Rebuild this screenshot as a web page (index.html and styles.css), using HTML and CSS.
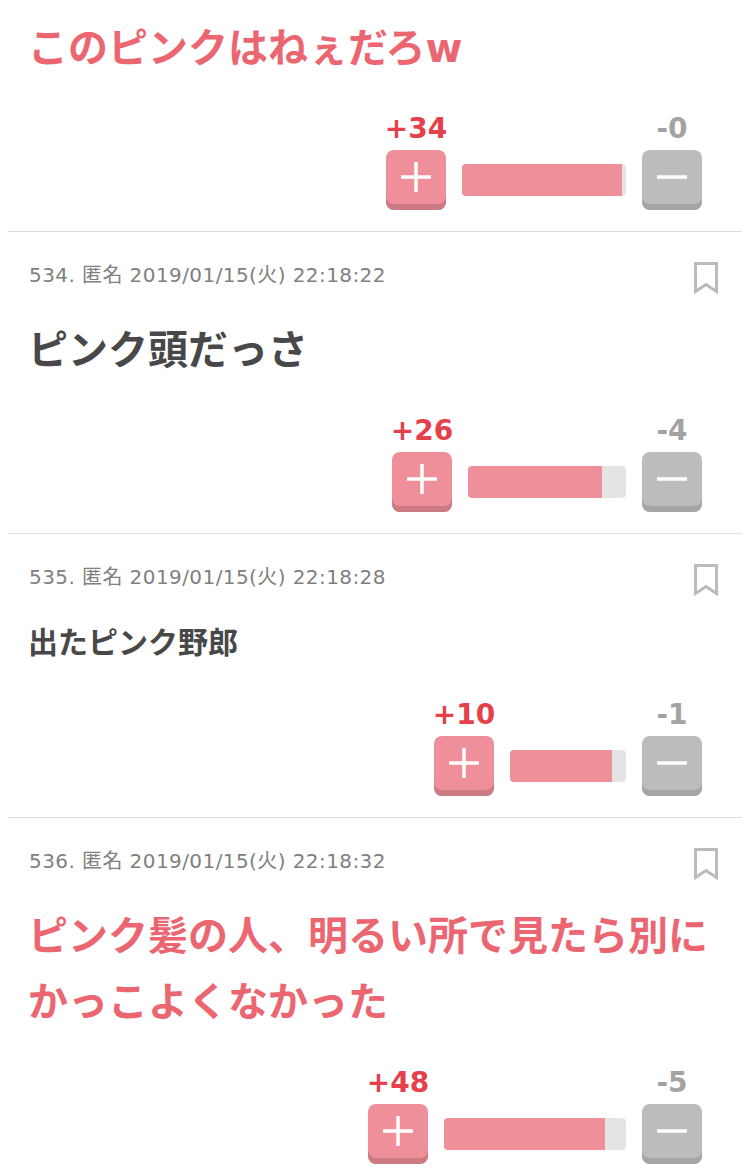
FILE: index.html
```html
<!DOCTYPE html>
<html lang="ja">
<head>
    <meta charset="UTF-8">
    <meta name="viewport" content="width=device-width, initial-scale=1.0">
    <title>コメント</title>
    <link rel="stylesheet" href="styles.css">
</head>
<body>
    <main class="comments">
        <!-- 533 starts above the fold, no header row -->
        <article class="comment comment-cut">
            <p class="comment-text large pink">このピンクはねぇだろw</p>
            <div class="votes">
                <div class="vote">
                    <span class="count plus-count">+34</span>
                    <button class="vote-btn plus"><svg viewBox="0 0 30 30"><path d="M15 0v30M0 15h30"/></svg></button>
                </div>
                <div class="bar" style="width: 164px"><div class="bar-fill" style="width: 160px"></div></div>
                <div class="vote">
                    <span class="count minus-count">-0</span>
                    <button class="vote-btn minus"><svg viewBox="0 0 30 30"><path d="M0 15h30"/></svg></button>
                </div>
            </div>
        </article>

        <article class="comment">
            <header class="comment-head">
                <span class="meta">534. 匿名 2019/01/15(火) 22:18:22</span>
                <svg class="bookmark" viewBox="0 0 24 32"><path d="M1.5 1.5h21v28l-10.500-7-10.500 7z"/></svg>
            </header>
            <p class="comment-text large">ピンク頭だっさ</p>
            <div class="votes">
                <div class="vote">
                    <span class="count plus-count">+26</span>
                    <button class="vote-btn plus"><svg viewBox="0 0 30 30"><path d="M15 0v30M0 15h30"/></svg></button>
                </div>
                <div class="bar" style="width: 158px"><div class="bar-fill" style="width: 134px"></div></div>
                <div class="vote">
                    <span class="count minus-count">-4</span>
                    <button class="vote-btn minus"><svg viewBox="0 0 30 30"><path d="M0 15h30"/></svg></button>
                </div>
            </div>
        </article>

        <article class="comment">
            <header class="comment-head">
                <span class="meta">535. 匿名 2019/01/15(火) 22:18:28</span>
                <svg class="bookmark" viewBox="0 0 24 32"><path d="M1.5 1.5h21v28l-10.500-7-10.500 7z"/></svg>
            </header>
            <p class="comment-text">出たピンク野郎</p>
            <div class="votes">
                <div class="vote">
                    <span class="count plus-count">+10</span>
                    <button class="vote-btn plus"><svg viewBox="0 0 30 30"><path d="M15 0v30M0 15h30"/></svg></button>
                </div>
                <div class="bar" style="width: 116px"><div class="bar-fill" style="width: 102px"></div></div>
                <div class="vote">
                    <span class="count minus-count">-1</span>
                    <button class="vote-btn minus"><svg viewBox="0 0 30 30"><path d="M0 15h30"/></svg></button>
                </div>
            </div>
        </article>

        <article class="comment comment-last">
            <header class="comment-head">
                <span class="meta">536. 匿名 2019/01/15(火) 22:18:32</span>
                <svg class="bookmark" viewBox="0 0 24 32"><path d="M1.5 1.5h21v28l-10.500-7-10.500 7z"/></svg>
            </header>
            <p class="comment-text large pink">ピンク髪の人、明るい所で見たら別にかっこよくなかった</p>
            <div class="votes">
                <div class="vote">
                    <span class="count plus-count">+48</span>
                    <button class="vote-btn plus"><svg viewBox="0 0 30 30"><path d="M15 0v30M0 15h30"/></svg></button>
                </div>
                <div class="bar" style="width: 182px"><div class="bar-fill" style="width: 161px"></div></div>
                <div class="vote">
                    <span class="count minus-count">-5</span>
                    <button class="vote-btn minus"><svg viewBox="0 0 30 30"><path d="M0 15h30"/></svg></button>
                </div>
            </div>
        </article>
    </main>
</body>
</html>
```

FILE: styles.css
```css
/* Comment list */
body {
    margin: 0;
    padding: 0;
    background-color: #fff;
    font-family: "DejaVu Sans", "Noto Sans CJK JP", sans-serif;
}

.comments {
    padding: 0 8px;
}

.comment {
    padding: 0 40px 21px 20px;
    border-bottom: 1px solid #dedede;
}

.comment-cut {
    padding-top: 15px;
}

.comment-last {
    padding-bottom: 7px;
    border-bottom: none;
}

.comment-head {
    display: flex;
    justify-content: space-between;
    align-items: center;
    height: 85px;
    margin-right: -16px;
}

.meta {
    margin-left: 1px;
    margin-bottom: 2px;
    font-size: 20px;
    letter-spacing: 0.42px;
    color: #808080;
}

.bookmark {
    width: 24px;
    height: 32px;
    margin-top: 6px;
    fill: none;
    stroke: #bbb;
    stroke-width: 3;
}

.comment-text {
    margin: 0;
    margin-right: -24px;
    font-size: 30px;
    font-weight: 700;
    line-height: 48px;
    color: #484848;
}

.comment-text.large {
    font-size: 40px;
    line-height: 66px;
}

.comment-text.pink {
    color: #ec6672;
}

/* Vote row */
.votes {
    display: flex;
    justify-content: flex-end;
    align-items: flex-end;
    gap: 16px;
    margin-top: 31px;
}

.vote {
    display: flex;
    flex-direction: column;
    align-items: center;
    width: 60px;
}

.count {
    margin-bottom: 4px;
    font-size: 28px;
    font-weight: bold;
    line-height: 34px;
    white-space: nowrap;
}

.plus-count {
    color: #e5414b;
}

.minus-count {
    color: #a3a3a3;
}

.vote-btn {
    display: flex;
    justify-content: center;
    align-items: center;
    width: 60px;
    height: 60px;
    padding: 0 0 6px;
    border: none;
    border-radius: 8px;
}

.vote-btn svg {
    width: 30px;
    height: 30px;
    fill: none;
    stroke: #fff;
    stroke-width: 3.5;
}

.plus {
    background-color: #ee8f99;
    box-shadow: inset 0 -6px 0 #cc7a83;
}

.minus {
    background-color: #bcbcbc;
    box-shadow: inset 0 -6px 0 #a5a5a5;
}

.bar {
    height: 32px;
    margin-bottom: 14px;
    border-radius: 4px;
    background-color: #e4e4e4;
    overflow: hidden;
}

.bar-fill {
    height: 100%;
    background-color: #ee8f99;
}
```
